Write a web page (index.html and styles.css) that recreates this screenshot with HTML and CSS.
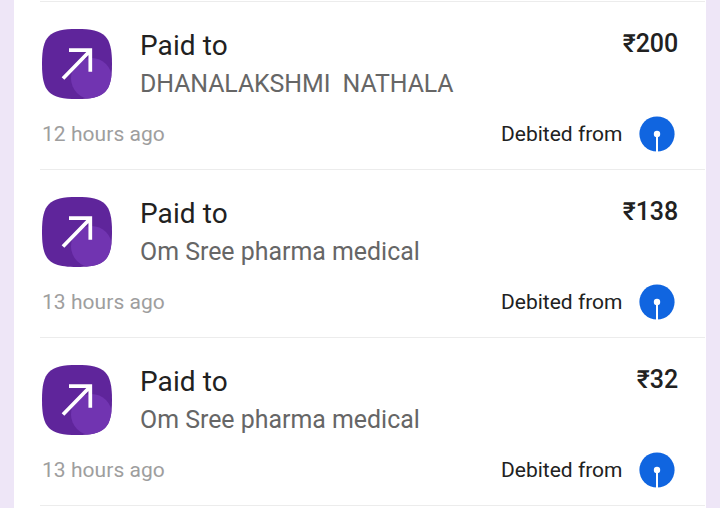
FILE: index.html
```
<!DOCTYPE html>
<html lang="en"><head><meta charset="utf-8"><title>Transaction history</title><link rel="stylesheet" href="styles.css"></head>
<body>
<svg class="defs" width="0" height="0"><defs>
<clipPath id="tile"><path d="M0 35C0 7 7 0 35 0S70 7 70 35 63 70 35 70 0 63 0 35Z"/></clipPath>
<symbol id="sent" viewBox="0 0 70 70"><g clip-path="url(#tile)"><rect width="70" height="70" fill="#5f259b"/><circle cx="49.500" cy="49.500" r="20.500" fill="#7134b1"/></g><path d="M21 49.500 48.300 21.500M27 21.200H48.300V42.700" fill="none" stroke="#fff" stroke-width="3.700"/></symbol>
<symbol id="bank" viewBox="0 0 36 36"><circle cx="18" cy="18" r="17.600" fill="#1065e0"/><circle cx="18" cy="18" r="3.200" fill="#fff"/><path d="M18 18V36" stroke="#fff" stroke-width="2"/></symbol>
</defs></svg>
<main class="list">
<article class="payment"><div class="summary"><svg class="sent"><use href="#sent"/></svg><div class="details"><h2>Paid to</h2><p class="payee wide">DHANALAKSHMI&nbsp; NATHALA</p></div><strong>₹200</strong></div><footer><time>12 hours ago</time><span class="source">Debited from</span><svg class="bank"><use href="#bank"/></svg></footer></article>
<article class="payment"><div class="summary"><svg class="sent"><use href="#sent"/></svg><div class="details"><h2>Paid to</h2><p class="payee">Om Sree pharma medical</p></div><strong>₹138</strong></div><footer><time>13 hours ago</time><span class="source">Debited from</span><svg class="bank"><use href="#bank"/></svg></footer></article>
<article class="payment"><div class="summary"><svg class="sent"><use href="#sent"/></svg><div class="details"><h2>Paid to</h2><p class="payee">Om Sree pharma medical</p></div><strong>₹32</strong></div><footer><time>13 hours ago</time><span class="source">Debited from</span><svg class="bank"><use href="#bank"/></svg></footer></article>
</main></body></html>
```
FILE: styles.css
```
* { box-sizing: border-box; }
body { margin: 0; height: 508px; overflow: hidden; background: #eee6f7; font-family: Roboto, sans-serif; color: #212121; }
.defs { position: absolute; }
.list { height: 508px; margin: 0 14px; padding: 1px 1px 0 26px; background: #fff; }
.payment { height: 168px; padding: 27px 27px 0 2px; border-top: 1px solid #ececec; }
.payment:last-child { height: 169px; border-bottom: 1px solid #ececec; }
.summary { display: flex; height: 70px; }
.sent { width: 70px; height: 70px; flex: none; }
.details { margin-left: 28px; flex: 1; }
h2, p { margin: 0; font-weight: 400; white-space: nowrap; }
h2 { font-size: 28px; line-height: 34px; letter-spacing: .1px; }
.payee { font-size: 24.92px; line-height: 42px; color: #666; }
.wide { letter-spacing: -.09px; }
strong { font-size: 25px; font-weight: 500; line-height: 29px; letter-spacing: -.1px; }
footer { display: flex; align-items: center; margin-top: 17px; height: 36px; font-size: 21px; }
time { flex: 1; color: #9e9e9e; letter-spacing: .05px; }
.bank { width: 36px; height: 36px; margin: 0 3px 0 16.5px; }
```
